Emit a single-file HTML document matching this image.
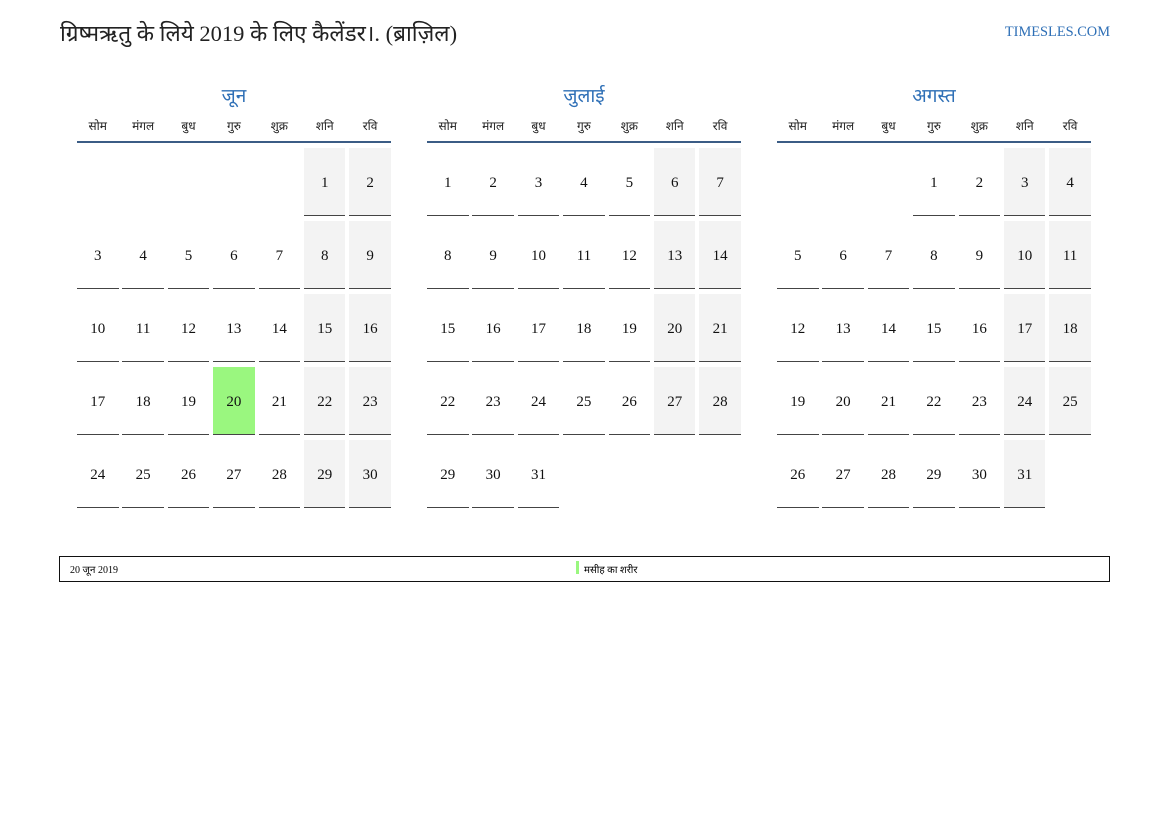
<!DOCTYPE html>
<html><head><meta charset="utf-8"><style>
body{margin:0;width:1169px;height:827px;background:#fff;font-family:"Liberation Serif","Noto Sans CJK SC",serif;position:relative;overflow:hidden}
.title{position:absolute;left:60px;top:17px;font-size:22.5px;color:#222}
.site{position:absolute;right:59px;top:24px;font-size:14.4px;color:#2e6fb6}
.m{position:absolute;top:82px;width:314px}
.mt{text-align:center;color:#2e6fb6;font-size:19px;height:26px}
.hd{display:grid;grid-template-columns:repeat(7,41.5px);column-gap:3.9px;font-size:12px;text-align:center;height:33px;line-height:37px;border-bottom:2px solid #3b5c85;color:#222}
.g{display:grid;grid-template-columns:repeat(7,41.5px);column-gap:3.9px;row-gap:5px;margin-top:5px}
.g div{height:67px;line-height:71px;text-align:center;font-size:15px;color:#111;border-bottom:1.5px solid #444;overflow:hidden}
.g div.e{border-bottom:none}
.g div.w{background:#f3f3f3}
.g div.h{background:#9af77f}
.foot{position:absolute;left:59px;top:556px;width:1049px;height:24px;border:1.5px solid #111;font-size:10px}
</style></head><body>
<div class="title">ग्रिष्मऋतु के लिये 2019 के लिए कैलेंडर।. (ब्राज़िल)</div>
<div class="site">TIMESLES.COM</div>

<div class="m" style="left:77px"><div class="mt">जून</div>
<div class="hd"><span>सोम</span><span>मंगल</span><span>बुध</span><span>गुरु</span><span>शुक्र</span><span>शनि</span><span>रवि</span></div>
<div class="g">
<div class="e"></div><div class="e"></div><div class="e"></div><div class="e"></div><div class="e"></div><div class="w">1</div><div class="w">2</div>
<div>3</div><div>4</div><div>5</div><div>6</div><div>7</div><div class="w">8</div><div class="w">9</div>
<div>10</div><div>11</div><div>12</div><div>13</div><div>14</div><div class="w">15</div><div class="w">16</div>
<div>17</div><div>18</div><div>19</div><div class="h">20</div><div>21</div><div class="w">22</div><div class="w">23</div>
<div>24</div><div>25</div><div>26</div><div>27</div><div>28</div><div class="w">29</div><div class="w">30</div>
</div></div>

<div class="m" style="left:427px"><div class="mt">जुलाई</div>
<div class="hd"><span>सोम</span><span>मंगल</span><span>बुध</span><span>गुरु</span><span>शुक्र</span><span>शनि</span><span>रवि</span></div>
<div class="g">
<div>1</div><div>2</div><div>3</div><div>4</div><div>5</div><div class="w">6</div><div class="w">7</div>
<div>8</div><div>9</div><div>10</div><div>11</div><div>12</div><div class="w">13</div><div class="w">14</div>
<div>15</div><div>16</div><div>17</div><div>18</div><div>19</div><div class="w">20</div><div class="w">21</div>
<div>22</div><div>23</div><div>24</div><div>25</div><div>26</div><div class="w">27</div><div class="w">28</div>
<div>29</div><div>30</div><div>31</div>
</div></div>

<div class="m" style="left:777px"><div class="mt">अगस्त</div>
<div class="hd"><span>सोम</span><span>मंगल</span><span>बुध</span><span>गुरु</span><span>शुक्र</span><span>शनि</span><span>रवि</span></div>
<div class="g">
<div class="e"></div><div class="e"></div><div class="e"></div><div>1</div><div>2</div><div class="w">3</div><div class="w">4</div>
<div>5</div><div>6</div><div>7</div><div>8</div><div>9</div><div class="w">10</div><div class="w">11</div>
<div>12</div><div>13</div><div>14</div><div>15</div><div>16</div><div class="w">17</div><div class="w">18</div>
<div>19</div><div>20</div><div>21</div><div>22</div><div>23</div><div class="w">24</div><div class="w">25</div>
<div>26</div><div>27</div><div>28</div><div>29</div><div>30</div><div class="w">31</div>
</div></div>

<div class="foot">
<span style="position:absolute;left:10px;top:5px">20 जून 2019</span>
<span style="position:absolute;left:516px;top:4px;width:3px;height:13px;background:#9af77f"></span>
<span style="position:absolute;left:524px;top:5px">मसीह का शरीर</span>
</div>
</body></html>
